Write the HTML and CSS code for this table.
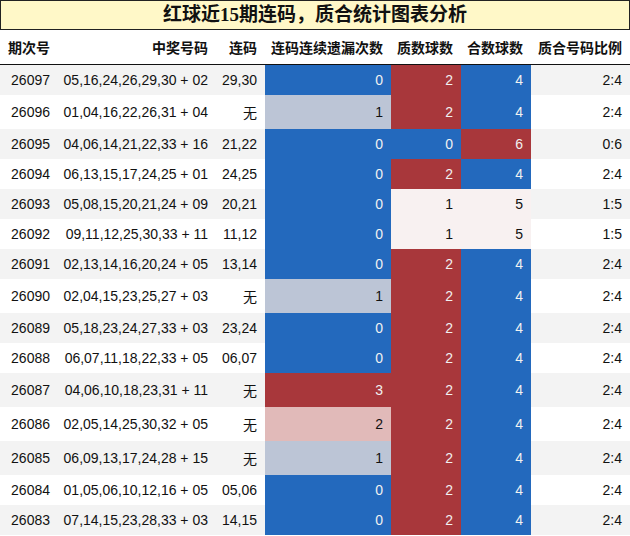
FILE: index.html
```html
<!DOCTYPE html>
<html lang="zh">
<head>
<meta charset="utf-8">
<title>红球近15期连码，质合统计图表分析</title>
<link rel="stylesheet" href="styles.css">
</head>
<body>
<div class="title">红球近15期连码，质合统计图表分析</div>
<table class="stats">
  <colgroup>
    <col class="c1"><col class="c2"><col class="c3"><col class="c4"><col class="c5"><col class="c6"><col class="c7">
  </colgroup>
  <thead>
    <tr><th>期次号</th><th>中奖号码</th><th>连码</th><th>连码连续遗漏次数</th><th>质数球数</th><th>合数球数</th><th>质合号码比例</th></tr>
  </thead>
  <tbody>
    <tr><td>26097</td><td>05,16,24,26,29,30 + 02</td><td>29,30</td><td class="blue">0</td><td class="red">2</td><td class="blue">4</td><td>2:4</td></tr>
    <tr><td>26096</td><td>01,04,16,22,26,31 + 04</td><td>无</td><td class="slate">1</td><td class="red">2</td><td class="blue">4</td><td>2:4</td></tr>
    <tr><td>26095</td><td>04,06,14,21,22,33 + 16</td><td>21,22</td><td class="blue">0</td><td class="blue">0</td><td class="red">6</td><td>0:6</td></tr>
    <tr><td>26094</td><td>06,13,15,17,24,25 + 01</td><td>24,25</td><td class="blue">0</td><td class="red">2</td><td class="blue">4</td><td>2:4</td></tr>
    <tr><td>26093</td><td>05,08,15,20,21,24 + 09</td><td>20,21</td><td class="blue">0</td><td class="pale">1</td><td class="pale">5</td><td>1:5</td></tr>
    <tr><td>26092</td><td>09,11,12,25,30,33 + 11</td><td>11,12</td><td class="blue">0</td><td class="pale">1</td><td class="pale">5</td><td>1:5</td></tr>
    <tr><td>26091</td><td>02,13,14,16,20,24 + 05</td><td>13,14</td><td class="blue">0</td><td class="red">2</td><td class="blue">4</td><td>2:4</td></tr>
    <tr><td>26090</td><td>02,04,15,23,25,27 + 03</td><td>无</td><td class="slate">1</td><td class="red">2</td><td class="blue">4</td><td>2:4</td></tr>
    <tr><td>26089</td><td>05,18,23,24,27,33 + 03</td><td>23,24</td><td class="blue">0</td><td class="red">2</td><td class="blue">4</td><td>2:4</td></tr>
    <tr><td>26088</td><td>06,07,11,18,22,33 + 05</td><td>06,07</td><td class="blue">0</td><td class="red">2</td><td class="blue">4</td><td>2:4</td></tr>
    <tr><td>26087</td><td>04,06,10,18,23,31 + 11</td><td>无</td><td class="red">3</td><td class="red">2</td><td class="blue">4</td><td>2:4</td></tr>
    <tr><td>26086</td><td>02,05,14,25,30,32 + 05</td><td>无</td><td class="pink">2</td><td class="red">2</td><td class="blue">4</td><td>2:4</td></tr>
    <tr><td>26085</td><td>06,09,13,17,24,28 + 15</td><td>无</td><td class="slate">1</td><td class="red">2</td><td class="blue">4</td><td>2:4</td></tr>
    <tr><td>26084</td><td>01,05,06,10,12,16 + 05</td><td>05,06</td><td class="blue">0</td><td class="red">2</td><td class="blue">4</td><td>2:4</td></tr>
    <tr><td>26083</td><td>07,14,15,23,28,33 + 03</td><td>14,15</td><td class="blue">0</td><td class="red">2</td><td class="blue">4</td><td>2:4</td></tr>
  </tbody>
</table>
</body>
</html>
```
FILE: styles.css
```css
html, body {
  margin: 0;
  padding: 0;
  background: #ffffff;
}

body {
  width: 630px;
  font-family: "Liberation Sans", "Noto Sans CJK SC", sans-serif;
  font-size: 14px;
  color: #111111;
}

.title {
  box-sizing: border-box;
  height: 30px;
  border: 1px solid #222222;
  background: #fff8c8;
  font-family: "Liberation Serif", "Noto Sans CJK SC", serif;
  font-weight: bold;
  font-size: 19px;
  line-height: 27px;
  text-align: center;
  color: #111111;
}

.stats {
  width: 630px;
  border-collapse: collapse;
  table-layout: fixed;
}

.c1 { width: 58px; }
.c2 { width: 158px; }
.c3 { width: 49px; }
.c4 { width: 126px; }
.c5 { width: 70px; }
.c6 { width: 70px; }
.c7 { width: 99px; }

.stats th {
  font-family: "Noto Sans CJK SC", sans-serif;
  font-weight: bold;
  font-size: 14px;
  line-height: 20px;
  padding: 7px 8px 7px 0;
  text-align: right;
  white-space: nowrap;
  border-bottom: 1px solid #111111;
  background: #ffffff;
}

.stats td {
  padding: 7px 8px 7px 0;
  text-align: right;
  white-space: nowrap;
  vertical-align: middle;
}

.stats tbody tr:nth-child(odd) {
  background: #f3f3f3;
}

.stats tbody tr:nth-child(even) {
  background: #ffffff;
}

.stats td.blue {
  background: #2369bd;
  color: #f1f1f1;
}

.stats td.red {
  background: #a8373b;
  color: #f1f1f1;
}

.stats td.slate {
  background: #bcc5d6;
  color: #111111;
}

.stats td.pink {
  background: #e1bab9;
  color: #111111;
}

.stats td.pale {
  background: #f8f1f1;
  color: #111111;
}
```
